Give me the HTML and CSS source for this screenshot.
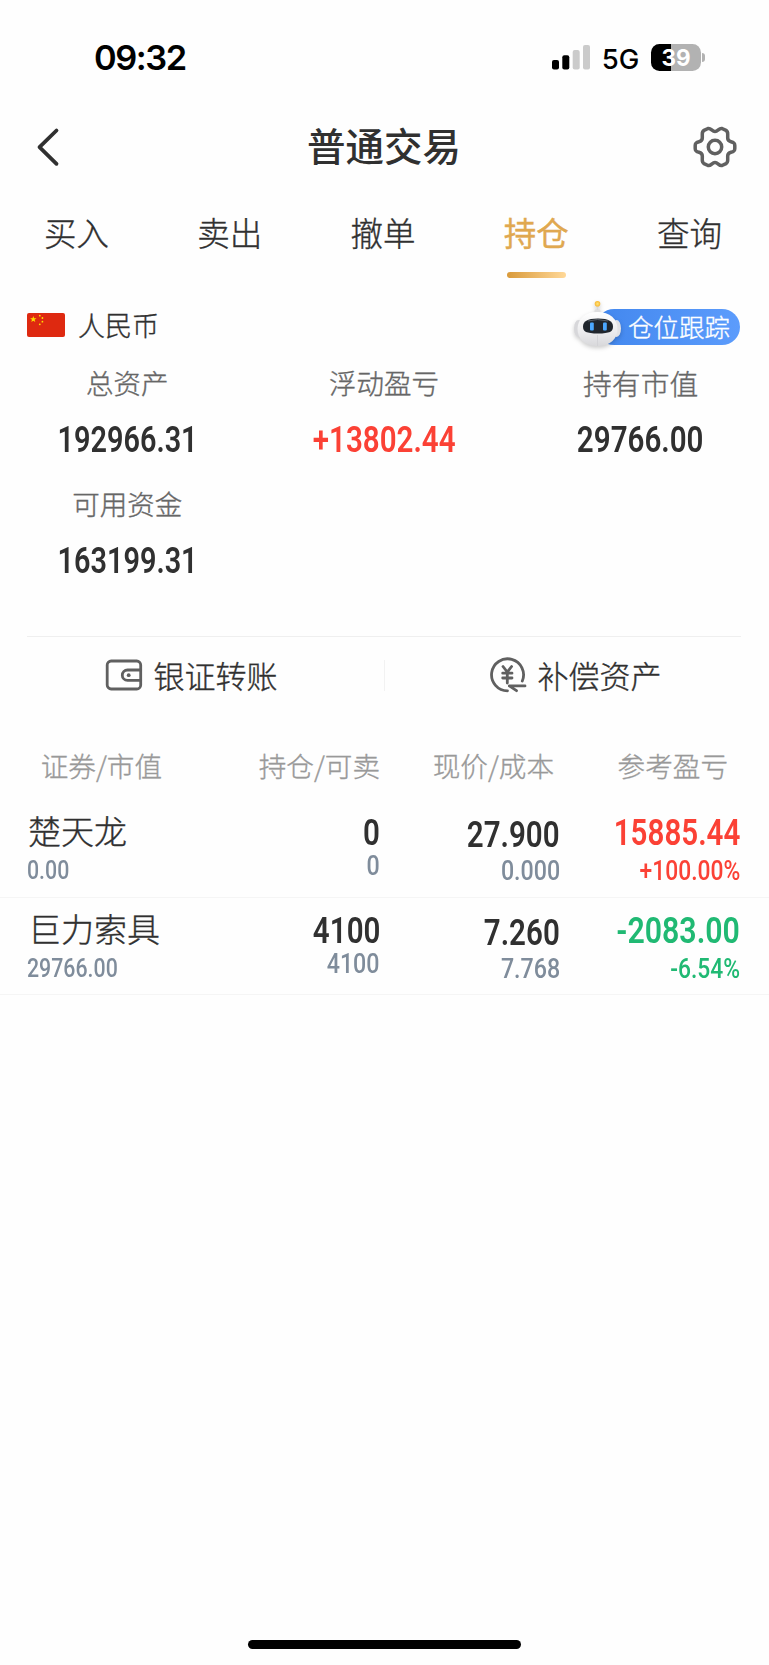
FILE: index.html
```html
<!DOCTYPE html>
<html lang="zh-CN">
<head>
<meta charset="utf-8">
<title>普通交易</title>
<link rel="stylesheet" href="styles.css">
</head>
<body>
<div class="screen">
  <div class="status">
    <span class="time">09:32</span>
    <div class="status-right">
      <svg class="signal" width="38" height="25" viewBox="0 0 38 25"><rect x="0" y="15" width="7" height="9.5" rx="2"/><rect x="10.3" y="10.3" width="7" height="14.2" rx="2"/><rect class="off" x="20.7" y="5" width="7" height="19.5" rx="2"/><rect class="off" x="31" y="0" width="7" height="24.5" rx="2"/></svg>
      <span class="net">5G</span>
      <div class="battery"><span>39</span></div><i class="battery-cap"></i>
    </div>
  </div>
  <header class="header">
    <svg class="back" width="24" height="40" viewBox="0 0 24 40"><path d="M20.5 3.5 3.5 20.2 20.5 36.8"/></svg>
    <h1>普通交易</h1>
    <svg class="gear" width="46" height="44" viewBox="-23 -22 46 44"><path d="M0-15.500C3-15.500 4-19.300 7-18.500L11-16.600C13.200-15.400 12.700-13.500 12.700-11.500V-9C12.700-7 14-5.800 16-5.300 19-4.600 19.800-3.800 19.800-1.500V1.500C19.800 3.800 19 4.600 16 5.300 14 5.800 12.700 7 12.700 9V11.500C12.700 13.500 13.200 15.400 11 16.600L7 18.500C4 19.300 3 15.500 0 15.500S-4 19.300-7 18.500L-11 16.600C-13.200 15.400-12.700 13.500-12.700 11.500V9C-12.700 7-14 5.800-16 5.300-19 4.600-19.800 3.800-19.800 1.500V-1.500C-19.800-3.800-19-4.600-16-5.300-14-5.800-12.700-7-12.700-9V-11.500C-12.700-13.500-13.200-15.400-11-16.600L-7-18.500C-4-19.300-3-15.500 0-15.500Z"/><circle r="6.700"/></svg>
  </header>
  <nav class="tabs">
    <span>买入</span><span>卖出</span><span>撤单</span><span class="active">持仓</span><span>查询</span>
  </nav>
  <section class="currency">
    <svg class="flag" width="38" height="24" viewBox="0 0 38 24"><rect width="38" height="24" rx="2" fill="#de2910"/><g fill="#ffde00"><path d="M6.300 3 7.100 5.300 9.500 5.300 7.600 6.800 8.300 9.100 6.300 7.700 4.300 9.100 5 6.800 3.100 5.300 5.500 5.300Z"/><circle cx="12.800" cy="2.700" r=".9"/><circle cx="15.400" cy="5" r=".9"/><circle cx="15.400" cy="8.700" r=".9"/><circle cx="12.800" cy="11.300" r=".9"/></g></svg>
    <span class="currency-name">人民币</span>
    <div class="track">仓位跟踪
      <svg class="robot" width="54" height="56" viewBox="0 0 54 56">
        <defs><linearGradient id="shell" x2="0" y2="1"><stop stop-color="#fff"/><stop offset=".6" stop-color="#ebebed"/><stop offset="1" stop-color="#d8d8db"/></linearGradient>
        <radialGradient id="bulb"><stop stop-color="#ffe680"/><stop offset="1" stop-color="#f8b62d"/></radialGradient></defs>
        <rect x="22.500" y="10" width="6" height="8" rx="2" fill="#dededf"/>
        <path d="M25.500 7V11" stroke="#d8d8da" stroke-width="1.500"/>
        <circle cx="25.500" cy="4.800" r="2.800" fill="url(#bulb)"/>
        <ellipse cx="6.500" cy="29.500" rx="4.500" ry="8.500" fill="#d7d7da"/>
        <ellipse cx="44.500" cy="29.500" rx="4.500" ry="8.500" fill="#e2e2e5"/>
        <path d="M25.500 13C38 13 45.500 20 45.500 30S38 47 25.500 47 5.500 40 5.500 30 13 13 25.500 13Z" fill="url(#shell)"/>
        <path d="M25.500 36V47" stroke="#cfcfd2" stroke-width=".7"/>
        <path d="M26 19.500C37 19.500 41 22.500 41 27.500 41 32.500 38 34.500 26 34.500S11 32.500 11 27.500C11 22.500 15 19.500 26 19.500Z" fill="#20262d"/>
        <path d="M16 22Q25 19 36 22" stroke="#59616a" fill="none"/>
        <rect x="18" y="23.500" width="3.800" height="8" rx="1" fill="#4ba8ff"/><rect x="31" y="23.500" width="3.800" height="8" rx="1" fill="#4ba8ff"/>
      </svg>
    </div>
  </section>
  <section class="assets">
    <div><label>总资产</label><b class="n narrow">192966.31</b></div>
    <div><label>浮动盈亏</label><b class="n red">+13802.44</b></div>
    <div><label class="wide">持有市值</label><b class="n">29766.00</b></div>
    <div><label>可用资金</label><b class="n narrow">163199.31</b></div>
  </section>
  <section class="actions">
    <div><svg width="38" height="36" viewBox="0 0 38 36"><rect x="2.200" y="4" width="33.500" height="28" rx="4"/><path d="M35.700 13H22.500A5.200 5.200 0 0 0 22.500 23.400H35.700"/><circle class="dot" cx="23.700" cy="18.200" r="1.900"/></svg>银证转账</div>
    <div><svg width="38" height="36" viewBox="0 0 38 36"><path d="M18.500 33.800A16 16 0 1 1 33.300 24"/><path d="M36 28.900H20.300L27.500 33.700" stroke-linejoin="round"/><path d="M14 9.500 18.300 15 22.600 9.500M18.300 15V26M13.700 16.200H23M13.700 21H23"/></svg>补偿资产</div>
  </section>
  <section class="table">
    <div class="thead"><span>证券/市值</span><span>持仓/可卖</span><span>现价/成本</span><span>参考盈亏</span></div>
    <div class="row">
      <div class="c1"><strong>楚天龙</strong><b class="s">0.00</b></div>
      <div class="c2"><b class="n">0</b><b class="s">0</b></div>
      <div class="c3"><b class="n">27.900</b><b class="s">0.000</b></div>
      <div class="c4 red"><b class="n">15885.44</b><b class="s">+100.00%</b></div>
    </div>
    <div class="row">
      <div class="c1"><strong>巨力索具</strong><b class="s">29766.00</b></div>
      <div class="c2"><b class="n">4100</b><b class="s">4100</b></div>
      <div class="c3"><b class="n">7.260</b><b class="s">7.768</b></div>
      <div class="c4 green"><b class="n">-2083.00</b><b class="s">-6.54%</b></div>
    </div>
  </section>
  <div class="home"></div>
</div>
</body>
</html>
```
FILE: styles.css
```css
* { box-sizing: border-box; }
body { margin: 0; background: #fefefe; color: #303030; font-family: "Noto Sans CJK SC", sans-serif; font-weight: 300; -webkit-text-stroke: .35px currentColor; }
svg { display: block; flex: none; }
.screen { width: 769px; height: 1665px; display: flex; flex-direction: column; overflow: hidden; }

.status { height: 110px; padding: 5px 64px 0 94px; display: flex; justify-content: space-between; align-items: center; font-family: Inter, sans-serif; color: #000; -webkit-text-stroke: 0; }
.time { font-size: 34.400px; font-weight: 600; letter-spacing: -1.450px; }
.status-right { display: flex; align-items: center; }
.signal .off { fill: #cbcbcb; }
.net { margin: 2px 12px 0 12px; font-size: 27.500px; font-weight: 500; letter-spacing: -.2px; }
.battery { width: 50px; height: 27px; border-radius: 8.500px; background: linear-gradient(90deg, #000 0 40%, #b2b2b2 40%); color: #fff; text-align: center; font-size: 22.500px; line-height: 27.500px; font-weight: 700; }
.battery-cap { width: 3px; height: 9px; margin-left: 1px; border-radius: 0 4px 4px 0; background: #b2b2b2; }

.header { height: 74px; padding: 0 31px 0 36px; display: flex; align-items: center; justify-content: space-between; }
.back { margin-right: 22px; }
.back path { fill: none; stroke: #303030; stroke-width: 3.800; stroke-linecap: round; stroke-linejoin: round; }
.header h1 { margin: 0 6px 5px 0; font-size: 38.500px; line-height: 65px; font-weight: 500; -webkit-text-stroke: 0; }
.gear { fill: none; stroke: #606060; stroke-width: 3.500; stroke-linejoin: round; }

.tabs { height: 101px; margin-right: 3px; display: grid; grid-template-columns: repeat(5, 1fr); font-size: 32.500px; line-height: 96px; text-align: center; }
.tabs .active { color: #e0a850; font-weight: 400; }
.tabs .active::after { content: ""; display: block; width: 59px; height: 6px; margin: -8px auto 0; border-radius: 3px; background: linear-gradient(90deg, #d99a3a, #ffd898); }

.currency { height: 80px; padding: 0 29px 0 27px; display: flex; align-items: center; }
.currency-name { margin: -2px 0 0 13px; font-size: 27px; }
.track { position: relative; width: 144px; height: 36px; margin: 4px 0 0 auto; padding-left: 32px; border-radius: 18px; background: linear-gradient(90deg, #4287ee, #5c9cfc); color: #fff; font-size: 25.500px; line-height: 34px; white-space: nowrap; }
.robot { position: absolute; left: -24px; top: -10px; filter: drop-shadow(0 2px 2px rgba(0, 0, 0, .2)); }

.assets { height: 271px; margin-left: -1px; display: grid; grid-template-columns: repeat(3, 1fr); grid-auto-rows: 121px; }
.assets > div { display: flex; flex-direction: column; align-items: center; }
.assets label { height: 36px; line-height: 35px; font-size: 27.500px; color: #666; }
.assets label.wide { font-size: 28.800px; }
.assets .n { margin-top: 21px; }

.n, .s { display: block; font-family: Roboto, sans-serif; transform: scaleX(.81); white-space: nowrap; -webkit-text-stroke: 0; }
.n { font-size: 36.500px; line-height: 36px; font-weight: 600; }
.n.narrow { transform: scaleX(.79); }
.s { font-size: 27.500px; line-height: 26px; font-weight: 500; color: #7f8c9b; }
.red, .red .s { color: #fb4135; }
.green, .green .s { color: #20b973; }

.actions { height: 79px; margin: 0 28px 0 27px; border-top: 1.500px solid #efefef; display: grid; grid-template-columns: 1fr 1fr; position: relative; }
.actions > div { display: flex; align-items: center; justify-content: center; gap: 11px; font-size: 31px; line-height: 72px; padding-bottom: 3px; }
.actions > div:first-child { padding-right: 29px; }
.actions > div:last-child { padding-left: 25px; }
.actions > div + div::before { content: ""; position: absolute; left: 357px; top: 23px; width: 1px; height: 31px; background: #f2f2f2; }
.actions svg { fill: none; stroke: #606060; stroke-width: 2.800; stroke-linecap: round; }
.actions .dot { fill: #606060; stroke: none; }

.thead { height: 71px; margin-top: 14px; display: grid; grid-template-columns: 162px 218px 174px 174px; text-align: right; font-size: 27.600px; line-height: 73px; color: #999; }
.row { height: 97.500px; padding: 0 29px 0 27px; display: grid; grid-template-columns: 180px 173px 180px 180px; border-bottom: 1.500px solid #f5f5f5; }
.row > div { display: flex; flex-direction: column; align-items: flex-end; }
.row > .c1 { align-items: flex-start; }
.row .n, .row .s { transform-origin: right; }
.row .s { transform: scaleX(.845); }
.row .c4 .s { transform: scaleX(.83); }
.row .c1 .s { transform: scaleX(.82); transform-origin: left; font-size: 26px; margin-top: -4px; }
.row .green .n { transform: scaleX(.83); }
.c1 strong { margin-left: 1px; font-size: 33px; line-height: 61px; font-weight: 300; }
.c2, .c4 { padding-top: 15px; }
.c3 { padding-top: 17px; }
.c3 .s { margin-top: 5px; }
.c2 .s { margin-top: 2px; }
.c4 .s { margin-top: 7px; }
.home { width: 273px; height: 9px; margin: auto auto 16px; border-radius: 5px; background: #000; }
```
